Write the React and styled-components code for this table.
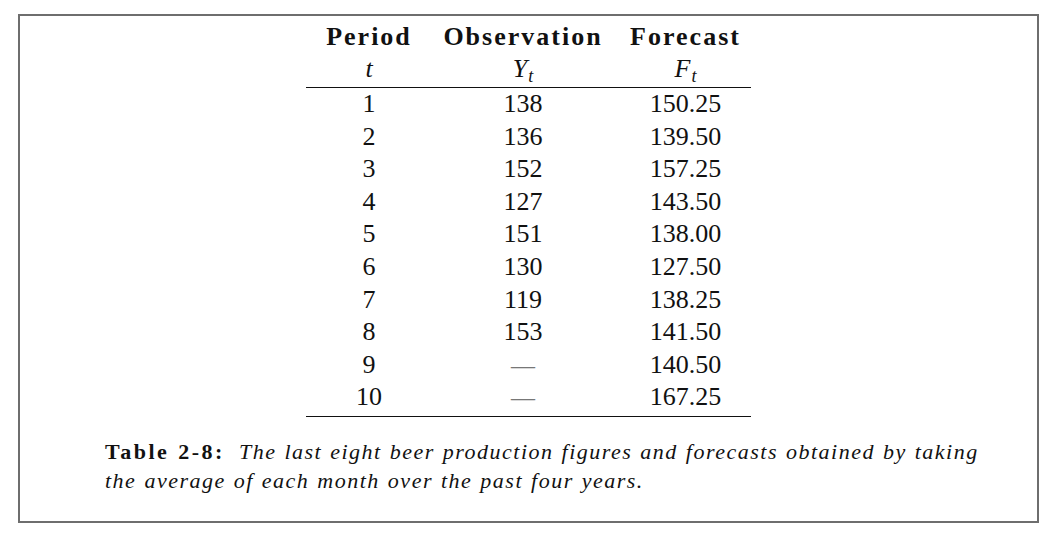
import React from "react";
import styled, { createGlobalStyle } from "styled-components";

const rows = [
  [1, "138", "150.25"],
  [2, "136", "139.50"],
  [3, "152", "157.25"],
  [4, "127", "143.50"],
  [5, "151", "138.00"],
  [6, "130", "127.50"],
  [7, "119", "138.25"],
  [8, "153", "141.50"],
  [9, null, "140.50"],
  [10, null, "167.25"],
];

export default function App() {
  return (
    <>
      <GlobalStyle />
      <Frame>
        <Table>
          <HeadRow>
            <Cell>Period</Cell>
            <Cell>Observation</Cell>
            <Cell>Forecast</Cell>
          </HeadRow>
          <SymbolRow>
            <Cell>
              <Var>t</Var>
            </Cell>
            <Cell>
              <Var>Y</Var>
              <Sub>t</Sub>
            </Cell>
            <Cell>
              <Var>F</Var>
              <Sub>t</Sub>
            </Cell>
          </SymbolRow>
          <Body>
            {rows.map(([t, y, f]) => (
              <Row key={t}>
                <Cell>{t}</Cell>
                <Cell>{y ? y : <Dash>—</Dash>}</Cell>
                <Cell>{f}</Cell>
              </Row>
            ))}
          </Body>
        </Table>
        <Caption>
          <Label>Table 2-8:</Label>{" "}
          <em>
            The last eight beer production figures and forecasts obtained by
            taking
            <br />
            the average of each month over the past four years.
          </em>
        </Caption>
      </Frame>
    </>
  );
}

const GlobalStyle = createGlobalStyle`
  body {
    margin: 0;
    background: #fff;
    font-family: "Liberation Serif", "Times New Roman", serif;
    color: #111;
  }
`;

const Frame = styled.div`
  box-sizing: border-box;
  margin: 14px 0 0 18px;
  width: 1021px;
  height: 509px;
  border: 2px solid #6e6e6e;
  padding-top: 4px;
  display: flex;
  flex-direction: column;
  align-items: center;
`;

const Table = styled.div`
  width: 445px;
  display: flex;
  flex-direction: column;
`;

const Columns = styled.div`
  display: grid;
  grid-template-columns: 126px 182px 137px;
  text-align: center;
  font-size: 26px;

  & > :nth-child(3) {
    padding-left: 6px;
  }
`;

const HeadRow = styled(Columns)`
  font-weight: bold;
  letter-spacing: 2px;
  line-height: 33px;
`;

const SymbolRow = styled(Columns)`
  line-height: 31px;
  border-bottom: 1.3px solid #111;
`;

const Body = styled.div`
  border-bottom: 1.3px solid #111;
  padding-bottom: 2px;
`;

const Row = styled(Columns)`
  line-height: 32.6px;
`;

const Cell = styled.div``;

const Var = styled.span`
  font-style: italic;
`;

const Sub = styled.span`
  font-style: italic;
  font-size: 18px;
  position: relative;
  top: 5px;
  margin-left: 1px;
`;

const Dash = styled.span`
  color: #777;
  font-size: 24px;
`;

const Caption = styled.p`
  align-self: stretch;
  margin: 20px 0 0;
  padding-left: 85px;
  font-size: 22px;
  line-height: 29px;
  letter-spacing: 1.5px;
  word-spacing: 1px;
`;

const Label = styled.b`
  letter-spacing: 2.5px;
  margin-right: 6px;
`;
